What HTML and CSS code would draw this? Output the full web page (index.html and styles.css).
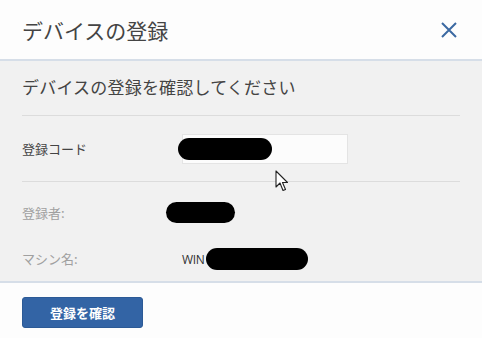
FILE: index.html
```html
<!DOCTYPE html>
<html lang="ja">
<head>
<meta charset="utf-8">
<link rel="stylesheet" href="styles.css">
</head>
<body>
<div class="dialog">
  <header class="header">
    <h1 class="title">デバイスの登録</h1>
    <svg class="close" width="16" height="16" viewBox="0 0 16 16"><path d="M1 1L15 15M15 1L1 15" stroke="#3b69a2" stroke-width="2" fill="none"/></svg>
  </header>
  <main class="body">
    <div class="subtitle">デバイスの登録を確認してください</div>
    <div class="row row-code">
      <div class="label label-dark">登録コード</div>
      <div class="value">
        <div class="input"></div>
        <span class="blob blob-code"></span>
        <svg class="cursor" width="14" height="22" viewBox="0 0 14 22"><path d="M1 1L1 17L5 13L8 20.5L10.5 19.5L7.5 12.5L12.5 12.5Z" fill="#fff" stroke="#222" stroke-width="1.1" stroke-linejoin="round"/></svg>
      </div>
    </div>
    <div class="row row-info">
      <div class="label">登録者:</div>
      <div class="value"><span class="blob blob-user"></span></div>
    </div>
    <div class="row row-info row-last">
      <div class="label">マシン名:</div>
      <div class="value"><span class="win">WIN</span><span class="blob blob-machine"></span></div>
    </div>
  </main>
  <footer class="footer">
    <button class="btn">登録を確認</button>
  </footer>
</div>
</body>
</html>
```
FILE: styles.css
```css
html, body {
  margin: 0;
  padding: 0;
  background: #fdfdfd;
  font-family: "Noto Sans CJK JP", "Noto Sans", sans-serif;
}
.dialog {
  width: 482px;
  height: 338px;
  overflow: hidden;
}
.header {
  box-sizing: border-box;
  padding: 0 25px 0 22px;
  display: flex;
  align-items: center;
  justify-content: space-between;
  border-bottom: 2px solid #d6dee8;
  height: 61px;
  background: #fdfdfd;
}
.title {
  margin: 0;
  font-size: 21px;
  font-weight: 400;
  color: #444;
  line-height: 24px;
  padding-top: 1px;
}
.close {
  display: block;
  margin-top: 1px;
}
.body {
  background: #f1f1f1;
  padding: 0 22px;
  height: 220px;
  box-sizing: border-box;
}
.subtitle {
  font-size: 17px;
  letter-spacing: 0.2px;
  color: #444;
  line-height: 24px;
  padding: 14px 0 16px;
  border-bottom: 1px solid #dcdcdc;
}
.row {
  display: grid;
  grid-template-columns: 160px 1fr;
  align-items: center;
}
.row-code {
  padding: 18px 0 17px;
  border-bottom: 1px solid #dcdcdc;
}
.row-info {
  height: 46px;
}
.row-code + .row-info {
  margin-top: 8px;
}
.label {
  font-size: 13px;
  line-height: 18px;
  color: #a0a0a0;
}
.label-dark {
  color: #444;
}
.value {
  position: relative;
  height: 22px;
  display: flex;
  align-items: center;
}
.row-code .value {
  height: 30px;
}
.input {
  width: 166px;
  height: 30px;
  box-sizing: border-box;
  background: #fcfcfc;
  border: 1px solid #e4e4e4;
}
.blob {
  position: absolute;
  background: #000;
  border-radius: 11px;
}
.blob-code {
  left: -4px;
  top: 4px;
  width: 94px;
  height: 22px;
}
.cursor {
  position: absolute;
  left: 93px;
  top: 36px;
}
.win {
  font-family: "Open Sans", "Liberation Sans", sans-serif;
  font-size: 12px;
  color: #333;
  letter-spacing: -0.3px;
}
.blob-user {
  left: -16px;
  top: 0;
  width: 69px;
  height: 21px;
}
.blob-machine {
  left: 24px;
  top: 0;
  width: 102px;
  height: 22px;
}
.footer {
  border-top: 2px solid #d6dee8;
  padding: 14px 22px 0;
  background: #fdfdfd;
}
.btn {
  width: 121px;
  height: 31px;
  background: #3364a5;
  border: 1px solid #2c5a96;
  border-radius: 3px;
  color: #fff;
  font-family: "Noto Sans CJK JP", sans-serif;
  font-weight: 700;
  font-size: 13px;
  padding: 0;
  display: block;
}
```
